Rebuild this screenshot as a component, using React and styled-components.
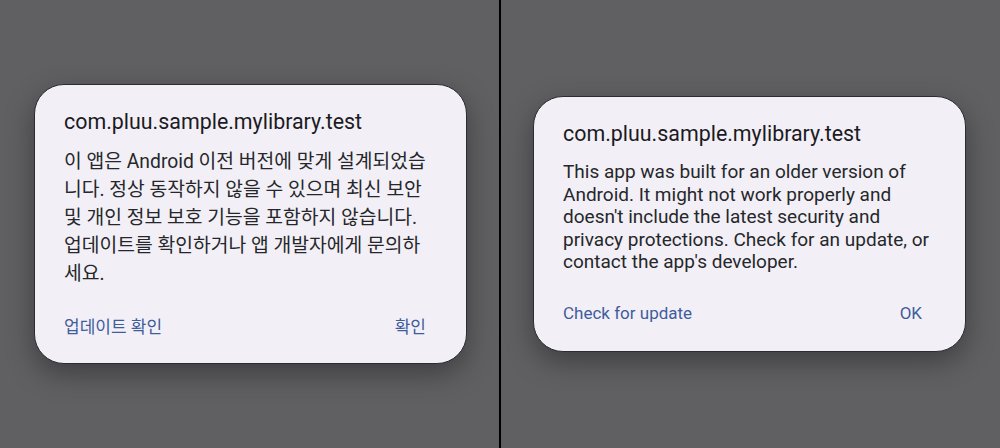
import React from 'react'
import styled, { createGlobalStyle } from 'styled-components'

const GlobalStyle = createGlobalStyle`
  html, body {
    margin: 0;
    padding: 0;
    background: #606063;
  }
  body {
    font-family: Roboto, "Noto Sans CJK KR", sans-serif;
  }
`;

const Screen = styled.div`
  width: 1000px;
  height: 448px;
  display: flex;
  overflow: hidden;
`;

const Pane = styled.div`
  flex: 1;
  display: flex;
  align-items: center;
  justify-content: center;
  background: #606063;
  padding: ${p => (p.$side === 'left' ? '0 0 0 2px' : '0 2px 0 0')};
`;

const Divider = styled.div`
  width: 2px;
  background: #000;
`;

const Dialog = styled.div`
  width: 433px;
  box-sizing: border-box;
  padding: 23px 30px 18px 29px;
  background: #f2f0f6;
  border: 1px solid #2c2c30;
  border-radius: 30px;
  box-shadow: 0 10px 28px rgba(0, 0, 0, 0.35);
  display: flex;
  flex-direction: column;
`;

const Title = styled.div`
  font-family: Roboto, "Noto Sans CJK KR", sans-serif;
  font-size: 21.4px;
  line-height: 28px;
  color: #1b1b1f;
  white-space: nowrap;
`;

const Body = styled.div`
  margin-top: ${p => p.$gap}px;
  font-family: Roboto, "Noto Sans CJK KR", sans-serif;
  font-size: ${p => p.$size}px;
  line-height: ${p => p.$lh}px;
  color: #26272b;
`;

const Line = styled.div`
  white-space: nowrap;
`;

const Actions = styled.div`
  margin-top: ${p => p.$gap}px;
  height: 40px;
  display: flex;
  align-items: center;
  justify-content: space-between;
  padding-right: ${p => p.$inset}px;
`;

const TextButton = styled.button`
  border: none;
  background: none;
  padding: 0;
  font-family: Roboto, "Noto Sans CJK KR", sans-serif;
  font-size: 17px;
  color: #3f5c9c;
  cursor: pointer;
`;

const korean = [
  '이 앱은 Android 이전 버전에 맞게 설계되었습',
  '니다. 정상 동작하지 않을 수 있으며 최신 보안',
  '및 개인 정보 보호 기능을 포함하지 않습니다.',
  '업데이트를 확인하거나 앱 개발자에게 문의하',
  '세요.',
];

const english = [
  'This app was built for an older version of',
  'Android. It might not work properly and',
  "doesn't include the latest security and",
  'privacy protections. Check for an update, or',
  "contact the app's developer.",
];

const CompatDialog = ({ lines, size, lh, gap, actionGap, inset, update, ok }) => (
  <Dialog>
    <Title>com.pluu.sample.mylibrary.test</Title>
    <Body $size={size} $lh={lh} $gap={gap}>
      {lines.map(l => <Line key={l}>{l}</Line>)}
    </Body>
    <Actions $gap={actionGap} $inset={inset}>
      <TextButton>{update}</TextButton>
      <TextButton>{ok}</TextButton>
    </Actions>
  </Dialog>
);

const App = () => {
  return (
    <>
      <GlobalStyle />
      <Screen>
        <Pane $side="left">
          <CompatDialog lines={korean} size={19.3} lh={28} gap={12} actionGap={17} inset={10}
            update="업데이트 확인" ok="확인" />
        </Pane>
        <Divider />
        <Pane $side="right">
          <CompatDialog lines={english} size={19} lh={22.5} gap={13} actionGap={19} inset={13}
            update="Check for update" ok="OK" />
        </Pane>
      </Screen>
    </>
  )
}

export default App
